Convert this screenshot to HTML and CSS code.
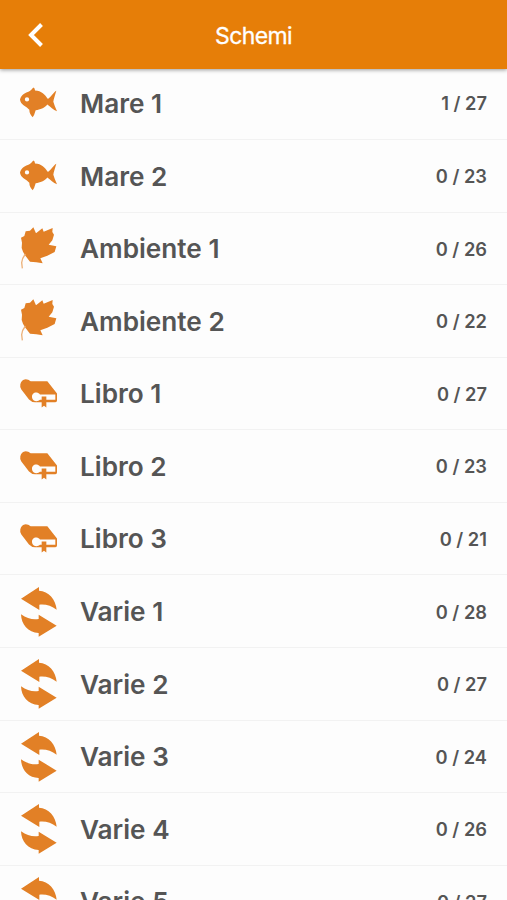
FILE: index.html
```
<!DOCTYPE html>
<html lang="it">
<head>
<meta charset="utf-8">
<title>Schemi</title>
<link rel="stylesheet" href="styles.css">
</head>
<body>
<svg class="defs" aria-hidden="true">
  <symbol id="fish" viewBox="27 -12.5 120 168">
    <path fill-rule="evenodd" d="M30 61C34 46 47 40 57 37Q64 33 70 25Q75 27 75 34C95 35 105 46 113 59C121 58 129 40 139 35C134 51 131 61 130 68Q134 82 141 96C130 93 121 82 112 76C104 87 90 91 77 93Q73 108 68 114Q58 105 58 92C51 82 31 77 30 61ZM51 54a6.5 6.5 0 1 0 0 13a6.5 6.5 0 1 0 0-13Z"/>
  </symbol>
  <symbol id="leaf" viewBox="27 5 120 168">
    <path d="M70 24L78 42L97 27L101 37L128 26L127 38L132 46L127 63L116 76L139 81L134 98L112 109L91 117L98 132L79 129L60 127L45 108L39 97L35 86L36 70L33 55L43 50L47 36L60 34Z"/>
    <path class="stem" d="M46 104Q36 117 35 130L37 147"/>
  </symbol>
  <symbol id="book" viewBox="27 -12.5 120 168">
    <path fill-rule="evenodd" d="M31 42Q34 28 47 27Q55 27 62 33H112L141 70V91Q141 96 136 96H109V112L102 107L95 112V96H78Q65 97 57 88L34 58Q29 51 31 42ZM90 73C80 62 65 68 66 81C67 94 83 96 90 89H95V79H109V89H136V73Z"/>
  </symbol>
  <symbol id="arrows" viewBox="27 9 120 168">
    <path d="M33 53L87 18V29C116 31 137 54 140 86C124 74 107 69 88 71V87ZM33 100C51 113 69 117 86 114V101L140 134L86 167V156C54 155 34 131 33 100Z"/>
  </symbol>
</svg>
<header class="bar">
  <svg class="back" viewBox="0 0 18 26"><path d="M14.5 2.5L4 13L14.5 23.5"/></svg>
  <h1 class="title">Schemi</h1>
</header>
<main class="list">
  <div class="row"><svg class="icon"><use href="#fish"/></svg><span class="name">Mare 1</span><span class="count">1 / 27</span></div>
  <div class="row"><svg class="icon"><use href="#fish"/></svg><span class="name">Mare 2</span><span class="count">0 / 23</span></div>
  <div class="row"><svg class="icon"><use href="#leaf"/></svg><span class="name">Ambiente 1</span><span class="count">0 / 26</span></div>
  <div class="row"><svg class="icon"><use href="#leaf"/></svg><span class="name">Ambiente 2</span><span class="count">0 / 22</span></div>
  <div class="row"><svg class="icon"><use href="#book"/></svg><span class="name">Libro 1</span><span class="count">0 / 27</span></div>
  <div class="row"><svg class="icon"><use href="#book"/></svg><span class="name">Libro 2</span><span class="count">0 / 23</span></div>
  <div class="row"><svg class="icon"><use href="#book"/></svg><span class="name">Libro 3</span><span class="count">0 / 21</span></div>
  <div class="row"><svg class="icon"><use href="#arrows"/></svg><span class="name">Varie 1</span><span class="count">0 / 28</span></div>
  <div class="row"><svg class="icon"><use href="#arrows"/></svg><span class="name">Varie 2</span><span class="count">0 / 27</span></div>
  <div class="row"><svg class="icon"><use href="#arrows"/></svg><span class="name">Varie 3</span><span class="count">0 / 24</span></div>
  <div class="row"><svg class="icon"><use href="#arrows"/></svg><span class="name">Varie 4</span><span class="count">0 / 26</span></div>
  <div class="row"><svg class="icon"><use href="#arrows"/></svg><span class="name">Varie 5</span><span class="count">0 / 27</span></div>
</main>
</body>
</html>
```
FILE: styles.css
```
* { box-sizing: border-box; }
body {
  margin: 0;
  height: 900px;
  overflow: hidden;
  display: flex;
  flex-direction: column;
  background: #fdfdfd;
  color: #555;
  font-family: Inter, "Liberation Sans", sans-serif;
}
.defs { display: none; }
.bar {
  position: relative;
  z-index: 1;
  flex: none;
  height: 69px;
  padding: 1px 27px 0;
  display: grid;
  grid-template-columns: 18px 1fr 18px;
  align-items: center;
  background: #e67e08;
  box-shadow: 0 1px 4px rgba(0, 0, 0, .4);
}
.back {
  width: 18px;
  height: 26px;
  fill: none;
  stroke: #fff;
  stroke-width: 4;
}
.title {
  margin: 0;
  padding-top: 1px;
  text-align: center;
  color: #fff;
  font-size: 23px;
  font-weight: 400;
  letter-spacing: -.6px;
  -webkit-text-stroke: .3px #fff;
}
.list {
  flex: 1;
  min-height: 0;
  margin-top: -1.7px;
  overflow: hidden;
}
.row {
  height: 72.6px;
  padding: .6px 20px 0 19px;
  display: flex;
  align-items: center;
  border-bottom: 1px solid #f2f2f2;
}
.icon {
  width: 40px;
  height: 56px;
  margin-right: 21px;
  fill: #e28026;
}
.stem {
  fill: none;
  stroke: #ecb27b;
  stroke-width: 4;
}
.name {
  flex: 1;
  font-size: 26.2px;
  font-weight: 600;
}
.count {
  font-size: 18.3px;
  font-weight: 600;
}
```
